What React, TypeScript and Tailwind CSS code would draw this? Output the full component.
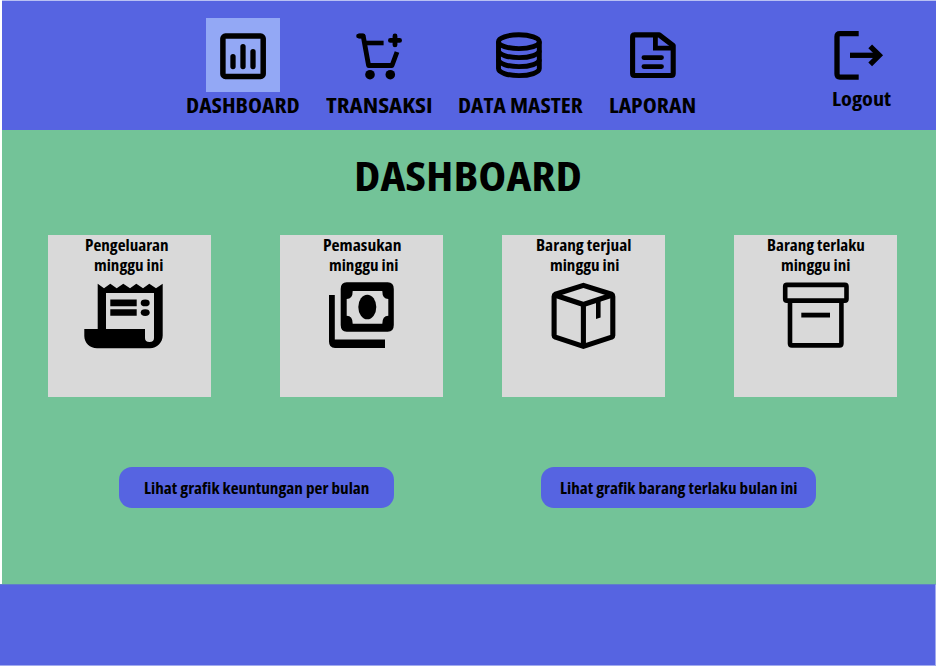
import { useLayoutEffect, useRef, useState, type ReactNode } from 'react';
import clsx from 'clsx';

/** Single line of condensed bold text, stretched to an exact width. */
function FitText({ children, width, className }: { children: string; width: number; className?: string }) {
  const ref = useRef<HTMLSpanElement>(null);
  const [scale, setScale] = useState(1);
  useLayoutEffect(() => {
    if (ref.current) setScale(width / ref.current.offsetWidth);
  }, [width, children]);
  return (
    <div className={clsx('whitespace-nowrap text-left', className)} style={{ width }}>
      <span ref={ref} className="inline-block origin-left" style={{ transform: `scaleX(${scale})` }}>
        {children}
      </span>
    </div>
  );
}

function Icon({ box, className, children }: { box: string; className: string; children: ReactNode }) {
  return (
    <svg viewBox={box} className={clsx('shrink-0 overflow-visible', className)} fill="none" stroke="#000" aria-hidden="true">
      {children}
    </svg>
  );
}

const ChartIcon = () => (
  <Icon box="220 33 46 46" className="h-[46px] w-[46px]">
    <rect x="222.9" y="36.1" width="40.3" height="40.3" rx="2.5" strokeWidth="5.5" />
    <path d="M233 56.6V66.6M243 46.6V66.6M253 51.6V66.6" strokeWidth="5.3" strokeLinecap="round" />
  </Icon>
);

const CartIcon = () => (
  <Icon box="356 33 46 46" className="h-[46px] w-[46px]">
    <path d="M358.5 36H363.2L368.6 65.5H392L397 52" strokeWidth="4.8" strokeLinejoin="round" />
    <path d="M358.5 36H363" strokeWidth="4.6" strokeLinecap="round" />
    <path d="M365 43H383.6" strokeWidth="4.6" />
    <path d="M395 36V44.9M390.4 40.4H399.6" strokeWidth="4.8" strokeLinecap="round" />
    <g fill="#000" stroke="none">
      <circle cx="370" cy="74.7" r="4.8" />
      <circle cx="390.3" cy="74.7" r="4.8" />
    </g>
  </Icon>
);

const DatabaseIcon = () => (
  <Icon box="496 33 46 46" className="h-[46px] w-[46px]">
    <g strokeWidth="4.9">
      <ellipse cx="518.9" cy="41.7" rx="20.4" ry="6.9" />
      <path d="M498.5 41.6V68.6C498.5 72.5 507.5 75.6 518.9 75.6S539.3 72.5 539.3 68.6V41.6" />
      <path d="M498.5 50.6C498.5 54.5 507.5 57.6 518.9 57.6S539.3 54.5 539.3 50.6" />
      <path d="M498.5 59.6C498.5 63.5 507.5 66.6 518.9 66.6S539.3 63.5 539.3 59.6" />
    </g>
  </Icon>
);

const DocumentIcon = () => (
  <Icon box="630 33 46 46" className="h-[46px] w-[46px]">
    <path d="M634.4 34.9H659.2L673.2 45.6V73.5Q673.2 75.5 671.2 75.5H634.6Q632.6 75.5 632.6 73.5V36.9Q632.6 34.9 634.6 34.9Z" strokeWidth="5.1" strokeLinejoin="round" />
    <path d="M655.4 35V48.2H673.4" strokeWidth="4.8" />
    <path d="M643.8 57.6H661.6M643.8 66.6H661.6" strokeWidth="4.6" strokeLinecap="round" />
  </Icon>
);

const LogoutIcon = () => (
  <Icon box="834 31 50 49" className="h-[49px] w-[50px]">
    <g strokeWidth="5.3">
      <path d="M858.7 33.6H840Q837 33.6 837 36.6V74.1Q837 77.1 840 77.1H858.7" />
      <path d="M850 55.3H878" />
      <path d="M870.2 46.3L879.3 55.3L870.2 64.3" />
    </g>
  </Icon>
);

const ReceiptIcon = () => (
  <Icon box="84 282 80 68" className="h-[68px] w-[80px]">
    <g fill="#000" stroke="none">
      <path
        fillRule="evenodd"
        d="M97.7 283.7L104 288.3L110.3 283.7L116.7 288.3L123.3 283.7L130 288.3L136.3 283.7L143 288.3L149.3 283.7L156 288.3L162.7 283.7V335.6C162.7 342.6 157 348.3 150 348.3H97C90 348.3 84.3 343 84.3 336V329H97.7ZM106 293V329H145V338Q145 342 149.5 342T154 338V293Z"
      />
      <path d="M110.3 299.4H136.7V306.2H110.3ZM110.3 309.3H136.7V315.8H110.3Z" />
      <ellipse cx="145.2" cy="302.9" rx="4.5" ry="3.4" />
      <ellipse cx="145.2" cy="312.6" rx="4.5" ry="3.4" />
    </g>
  </Icon>
);

const MoneyIcon = () => (
  <Icon box="328 282 67 68" className="h-[68px] w-[67px]">
    <g fill="#000" stroke="none">
      <path
        fillRule="evenodd"
        d="M346.7 282.3H387.7Q393.8 282.3 393.8 289V325Q393.8 331.7 387.7 331.7H346.7Q340.7 331.7 340.7 325V289Q340.7 282.3 346.7 282.3ZM352.7 291Q352.7 299 346.7 299V315.7Q352.7 315.7 352.7 323.7H382.3Q382.3 315.7 388.3 315.7V299Q382.3 299 382.3 291Z"
      />
      <ellipse cx="367.3" cy="307" rx="9" ry="12.3" />
      <path d="M329 295H334.8V339.4H385V348H335Q329 348 329 341.5Z" />
    </g>
  </Icon>
);

const PackageIcon = () => (
  <Icon box="551 282 65 68" className="h-[68px] w-[65px]">
    <g strokeWidth="5.1" strokeLinejoin="round">
      <path d="M583.4 285.4L611.6 294.3Q612.8 295 612.8 296.4V335.4Q612.8 336.6 611.6 337.2L583.4 346.4L555.4 337.2Q554.1 336.6 554.1 335.4V296.4Q554.1 295 555.4 294.3Z" />
      <path d="M554.6 295L583.4 304.5L612.3 295M583.4 304.5V346" />
    </g>
    <path d="M596 300H600.6V317.6L596 319.1Z" fill="#000" stroke="none" />
  </Icon>
);

const ArchiveIcon = () => (
  <Icon box="782 282 68 68" className="h-[68px] w-[68px]">
    <g strokeWidth="4.6">
      <rect x="785.2" y="284.9" width="61.3" height="15.7" rx="1.6" />
      <path d="M790 301V343.5Q790 345.4 791.9 345.4H839.5Q841.4 345.4 841.4 343.5V301" />
      <path d="M801.3 315.1H830" strokeWidth="4.8" />
    </g>
  </Icon>
);

const navItems = [
  { label: 'DASHBOARD', width: 113.5, gap: '', tile: 'bg-[#93a8f5]', icon: <ChartIcon /> },
  { label: 'TRANSAKSI', width: 107, gap: 'ml-[26px]', tile: '', icon: <CartIcon /> },
  { label: 'DATA MASTER', width: 125, gap: 'ml-[25.5px]', tile: 'mr-[3px]', icon: <DatabaseIcon /> },
  { label: 'LAPORAN', width: 87, gap: 'ml-[25.5px]', tile: 'ml-[1.5px]', icon: <DocumentIcon /> },
];

const cards = [
  { title: 'Pengeluaran', width: 84, gap: '', pad: 'pl-[36.7px]', sub: 'pl-[9px]', icon: <ReceiptIcon />, iconPad: 'pl-9' },
  { title: 'Pemasukan', width: 78, gap: 'ml-[69.6px]', pad: 'pl-[42.7px]', sub: 'pl-[6px]', icon: <MoneyIcon />, iconPad: 'pl-12' },
  { title: 'Barang terjual', width: 95, gap: 'ml-[59.8px]', pad: 'pl-[33.5px]', sub: 'pl-[14px]', icon: <PackageIcon />, iconPad: 'pl-[49px]' },
  { title: 'Barang terlaku', width: 98, gap: 'ml-[69.6px]', pad: 'pl-[32.5px]', sub: 'pl-[14px]', icon: <ArchiveIcon />, iconPad: 'pl-12' },
];

export default function App() {
  return (
    <div className="flex h-[666px] w-[937px] flex-col overflow-hidden bg-white font-['Open_Sans','Noto_Sans',sans-serif] font-bold text-black [font-stretch:75%]">
      <header className="ml-0.5 flex h-[130px] w-[934px] shrink-0 justify-between border-t border-[#b9c1f3] bg-[#5664e1] pl-[184px] pr-[45px]">
        <nav className="flex pt-[17px]">
          {navItems.map((item) => (
            <div key={item.label} className={clsx('flex flex-col items-center', item.gap)}>
              <div className={clsx('flex h-[74px] w-[74px] items-center justify-center pt-[2px]', item.tile)}>
                {item.icon}
              </div>
              <FitText width={item.width} className="text-[21px] leading-[26px]">
                {item.label}
              </FitText>
            </div>
          ))}
        </nav>
        <div className="flex flex-col pt-[30px]">
          <div className="pl-[2px]">
            <LogoutIcon />
          </div>
          <FitText width={59} className="text-[20px] leading-[37px]">
            Logout
          </FitText>
        </div>
      </header>

      <main className="ml-0.5 h-[454px] w-[934px] shrink-0 bg-[#73c398]">
        <div className="flex justify-center pr-[2px] pt-[15px]">
          <FitText width={228} className="text-[41.5px] leading-[60px]">
            DASHBOARD
          </FitText>
        </div>

        <section className="flex pl-[46.3px] pt-[29.7px]">
          {cards.map((card) => (
            <div key={card.title} className={clsx('h-[162.4px] w-[162.4px] shrink-0 bg-[#d9d9d9]', card.gap)}>
              <div className={clsx('text-[15.3px] leading-[20px]', card.pad)}>
                <FitText width={card.width}>{card.title}</FitText>
                <div className={card.sub}>
                  <FitText width={69}>minggu ini</FitText>
                </div>
              </div>
              <div className={clsx('pt-[7.3px]', card.iconPad)}>{card.icon}</div>
            </div>
          ))}
        </section>

        <section className="flex gap-[147.4px] pl-[117px] pt-[69.6px]">
          <button className="flex h-[41px] w-[275px] items-center justify-center rounded-[13px] bg-[#5664e1] pt-px text-[15.5px] leading-5">
            <FitText width={225}>Lihat grafik keuntungan per bulan</FitText>
          </button>
          <button className="flex h-[41px] w-[275px] items-center justify-center rounded-[13px] bg-[#5664e1] pt-px text-[15.5px] leading-5">
            <FitText width={238}>Lihat grafik barang terlaku bulan ini</FitText>
          </button>
        </section>
      </main>

      <footer className="h-[82px] w-[936px] shrink-0 border-b border-r border-t border-b-[#a2abee] border-r-[#a2abee] border-t-[#5f7fca] bg-[#5664e1]" />
    </div>
  );
}
